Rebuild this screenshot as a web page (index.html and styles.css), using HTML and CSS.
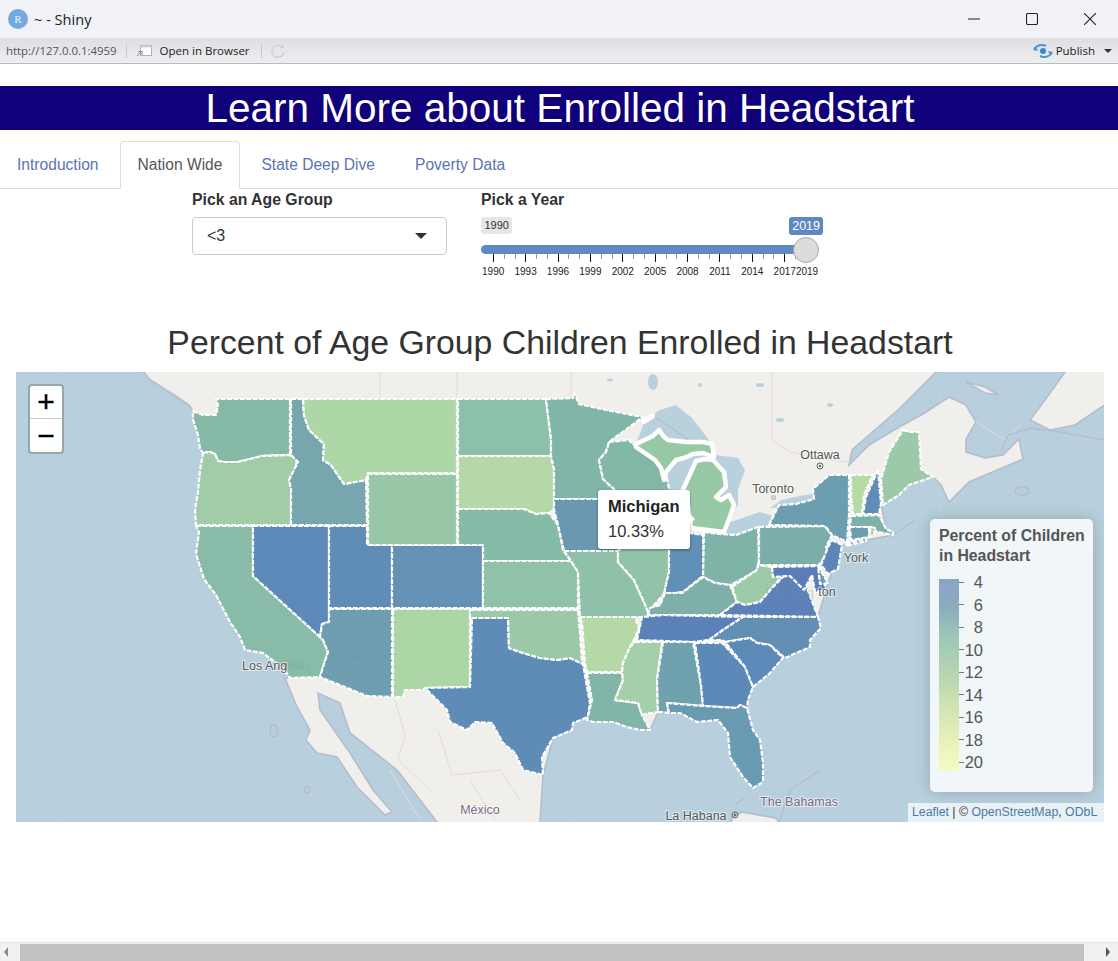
FILE: index.html
```html
<!DOCTYPE html>
<html lang="en">
<head>
<meta charset="utf-8">
<title>~ - Shiny</title>
<link rel="stylesheet" href="styles.css">
</head>
<body>
<div class="window">
  <header class="titlebar">
    <div class="title-left">
      <span class="r-logo">R</span>
      <span class="win-title">~ - Shiny</span>
    </div>
    <div class="win-controls">
      <svg class="win-icon" viewBox="0 0 12 12"><path d="M0 6h12" stroke="#222" stroke-width="1" fill="none"/></svg>
      <svg class="win-icon" viewBox="0 0 12 12"><rect x=".5" y=".5" width="11" height="11" rx="1.5" stroke="#222" stroke-width="1.1" fill="none"/></svg>
      <svg class="win-icon" viewBox="0 0 12 12"><path d="M0 0l12 12M12 0L0 12" stroke="#222" stroke-width="1.1" fill="none"/></svg>
    </div>
  </header>
  <div class="toolbar">
    <span class="url">http://127.0.0.1:4959</span>
    <span class="tool-sep"></span>
    <svg class="tool-open" viewBox="0 0 17 14"><rect x="4.5" y="1.5" width="11" height="10" fill="#fff" stroke="#9fb2c8"/><rect x="4.5" y="1.5" width="11" height="2" fill="#c9d6e6"/><path d="M1 12l4-4M2.5 7.5H6V11" stroke="#7f8c99" fill="none"/></svg>
    <span class="open-text">Open in Browser</span>
    <span class="tool-sep"></span>
    <svg class="tool-refresh" viewBox="0 0 16 16"><path d="M13 5A6 6 0 1 0 14 9" fill="none" stroke="#ccd2da" stroke-width="1.6"/><path d="M10 5h4V1z" fill="#ccd2da"/><circle cx="8" cy="8" r="3" fill="none" stroke="#e1e4e9"/></svg>
    <span class="tool-spacer"></span>
    <svg class="tool-publish" viewBox="0 0 20 14"><path d="M1 5C4 1 9 0 13 2" fill="none" stroke="#4d94d8" stroke-width="2"/><path d="M0 6l5 1-2-4z" fill="#4d94d8"/><path d="M19 9c-3 4-8 5-12 3" fill="none" stroke="#4d94d8" stroke-width="2"/><path d="M20 8l-5-1 2 4z" fill="#4d94d8"/><circle cx="10" cy="7" r="3" fill="#3f86c9"/></svg>
    <span class="publish-text">Publish</span>
    <span class="publish-caret"></span>
  </div>

  <main class="page">
    <h1 class="banner">Learn More about Enrolled in Headstart</h1>
    <nav class="tabs">
      <a class="tab">Introduction</a>
      <a class="tab active">Nation Wide</a>
      <a class="tab">State Deep Dive</a>
      <a class="tab">Poverty Data</a>
    </nav>
    <section class="inputs">
      <div class="field-select">
        <label class="field-label">Pick an Age Group</label>
        <div class="select-box"><span>&lt;3</span><i class="select-caret"></i></div>
      </div>
      <div class="field-slider">
        <label class="field-label">Pick a Year</label>
        <div class="chips">
          <span class="chip chip-min">1990</span>
          <span class="chip chip-max">2019</span>
        </div>
        <div class="track-wrap">
          <div class="track"></div>
          <span class="handle"></span>
        </div>
        <div class="ticks">
          <i class="tick major"></i><i class="tick"></i><i class="tick"></i>
          <i class="tick major"></i><i class="tick"></i><i class="tick"></i>
          <i class="tick major"></i><i class="tick"></i><i class="tick"></i>
          <i class="tick major"></i><i class="tick"></i><i class="tick"></i>
          <i class="tick major"></i><i class="tick"></i><i class="tick"></i>
          <i class="tick major"></i><i class="tick"></i><i class="tick"></i>
          <i class="tick major"></i><i class="tick"></i><i class="tick"></i>
          <i class="tick major"></i><i class="tick"></i><i class="tick"></i>
          <i class="tick major"></i><i class="tick"></i><i class="tick"></i>
          <i class="tick major"></i><i class="tick"></i><i class="tick major"></i>
        </div>
        <div class="tick-labels">
          <span>1990</span><span>1993</span><span>1996</span><span>1999</span><span>2002</span><span>2005</span><span>2008</span><span>2011</span><span>2014</span><span>2017</span><span class="last">2019</span>
        </div>
      </div>
    </section>
    <h2 class="map-title">Percent of Age Group Children Enrolled in Headstart</h2>

    <div class="map">
      <svg class="map-svg" viewBox="16 372 1088 450" aria-hidden="true">
        <g class="basemap">
          <rect x="16" y="372" width="1088" height="450" fill="#b8d0dd"/>
          <path d="M60 372V822M16 544H1104M570 372V822M940 372V822" stroke="#bdd4e0" stroke-width="1" fill="none"/>
          <g fill="#f0efeb" stroke="#b4bccd" stroke-width="1.6">
            <path d="M144 360L144 372L149 379L166 390L189 405L193 411L193 420L198 435L200 449L203 453L200 470L198 492L195 510L196 526L199 532L196 554L204 579L216 595L230 622L240 637L245 650L263 653L283 668L290 678L285 678L297 707L310 730L306 740L317 753L337 757L357 787L385 815L392 812L373 790L350 753L320 710L318 693L340 703L350 733L397 770L437 822L445 832L540 832L540 822L543 775L553 738L573 723L590 703L587 720L613 722L640 730L650 730L658 712L680 713L697 722L718 720L728 733L730 757L743 777L753 788L763 782L763 763L760 740L753 730L747 708L753 687L770 673L785 658L810 647L810 640L821 628L818 617L828 583L842 545L866 540L893 535L886 529L881 504L899 495L909 485L933 477L941 485L949 502L969 482L1023 459L1019 439L1003 455L985 458L966 452L966 439L976 422L966 405L949 397L923 414L899 427L869 445L849 465L852 450L899 409L916 392L936 372L940 360Z"/>
            <path d="M1030 420L1045 400L1065 372L1070 360L1112 360L1112 400L1075 425L1050 430Z"/>
            <path d="M966 382L985 387L999 395L985 393Z"/>
            <path d="M730 832L732 818L742 812L775 818L790 832Z"/>
          </g>
          <g fill="#b9d1dd" stroke="none">
            <path d="M636 444L645 420L660 410L676 405L692 418L709 440L716 455L738 458L745 470L738 490L738 505L720 530L690 527L670 510L666 472L662 462Z"/>
            <path d="M770 508L782 500L800 496L812 494L815 500L795 506Z"/>
            <path d="M700 535L725 524L760 512L772 516L768 526L736 536Z"/>
            <ellipse cx="653" cy="382" rx="5" ry="8"/>
            <ellipse cx="830" cy="405" rx="3" ry="2"/>
            <ellipse cx="760" cy="385" rx="4" ry="2"/>
            <ellipse cx="610" cy="380" rx="3" ry="1.5"/>
            <ellipse cx="700" cy="385" rx="2" ry="2"/>
            <ellipse cx="780" cy="420" rx="4" ry="2"/>
            <path d="M160 386L175 394L186 402L176 396Z"/>
          </g>
          <g fill="none" stroke="#e2dadf" stroke-width="1">
            <path d="M380 372V398M457 372V398M571 372V396M772 372V440L790 452L830 460L850 462"/>
            <path d="M395 700L405 735L398 760L430 790M438 730L452 775L500 770L520 800M470 780L495 820M390 770L420 820"/>
            <path d="M976 422L1005 440L1020 425"/>
          </g>
          <g fill="none" stroke="#b4bccd" stroke-width="1.4">
            <ellipse cx="274" cy="731" rx="4" ry="6"/>
            <circle cx="307" cy="790" r="3"/>
            <ellipse cx="1022" cy="491" rx="7" ry="4"/>
            <path d="M1104 440L1060 432L1030 428L1008 435L1002 450M893 535L915 520M779 822L790 790L820 770M735 805L745 798M655 417L692 442"/>
          </g>
        </g>
        <g class="states" stroke="#fff" stroke-width="2.2" stroke-dasharray="5 1.4" stroke-linejoin="round">
          <polygon fill="#86baa6" points="193,411 203,415 216,415 218,405 216,399 290,399 290,455 277,455 262,456 250,459 238,462 224,462 218,461 215,454 210,452 204,452 203,453 200,449 198,435 193,420"/>
          <polygon fill="#a1cca8" points="203,453 210,452 215,454 218,461 224,462 238,462 250,459 262,456 290,455 297,460 295,470 289,480 292,487 291,495 291,525 196,525 195,510 198,492 200,470"/>
          <polygon fill="#88bca8" points="196,526 253,526 253,576 320,637 323,640 328,652 323,667 320,677 290,678 283,668 263,653 245,650 240,637 230,622 216,595 204,579 196,554 199,532"/>
          <polygon fill="#5d8ab8" points="253,526 329,526 329,622 322,624 320,637 253,576"/>
          <polygon fill="#5f8db8" points="329,526 367,526 367,545 392,545 392,608 329,608"/>
          <polygon fill="#6592b4" points="392,545 483,545 483,608 392,608"/>
          <polygon fill="#6f9eb0" points="329,609 392,609 392,697 367,696 320,677 323,667 328,652 323,640 320,637 322,624 329,622"/>
          <polygon fill="#add6a7" points="393,609 470,609 470,687 425,688 423,690 405,690 403,697 393,697"/>
          <polygon fill="#5f8cb7" points="472,618 508,618 509,648 520,652 540,658 557,660 570,658 583,664 587,687 590,703 588,717 573,723 572,730 553,738 542,757 543,775 523,770 515,753 503,743 492,723 475,722 467,730 450,722 447,710 425,688 470,687"/>
          <polygon fill="#77a6ae" points="291,399 303,399 304,415 309,430 324,444 323,460 331,465 344,484 366,480 367,525 291,525 291,489 289,480 298,462 291,455"/>
          <polygon fill="#aed7a8" points="303,399 457,399 457,473 368,473 366,480 344,484 331,465 323,460 324,444 309,430 304,415"/>
          <polygon fill="#98c7a8" points="368,474 457,474 457,545 368,545"/>
          <polygon fill="#8cc0a8" points="458,399 546,399 551,439 551,456 458,456"/>
          <polygon fill="#b4d8a6" points="458,456 551,456 554,469 554,510 549,513 536,514 524,509 458,509"/>
          <polygon fill="#86bba7" points="458,509 524,509 536,514 549,513 558,525 563,550 571,561 483,561 483,545 458,545"/>
          <polygon fill="#8fc2a8" points="483,561 571,561 578,572 578,608 483,608"/>
          <polygon fill="#9bc9a8" points="470,610 578,610 580,633 582,662 583,664 570,658 557,660 540,658 520,652 509,648 508,618 470,618"/>
          <polygon fill="#80b5a8" points="546,399 573,398 574,392 579,404 606,410 643,417 609,442 606,452 599,460 603,479 614,489 619,499 554,499 554,469 551,456 551,439"/>
          <polygon fill="#83b8a7" points="609,442 629,440 636,447 663,462 666,472 669,489 669,515 625,515 618,505 614,489 603,479 599,460 606,452"/>
          <polygon fill="#6a98b0" points="554,499 619,499 625,515 640,520 635,535 618,551 564,551 558,525 554,510"/>
          <polygon fill="#8ec1a8" points="564,551 618,551 618,562 634,580 643,600 648,610 648,617 642,617 635,617 580,617 578,572 571,561"/>
          <polygon fill="#90c3a8" points="625,515 669,515 669,572 664,594 648,612 643,600 634,580 618,562 618,551 635,535 640,520"/>
          <polygon fill="#6090b5" points="669,530 703,535 704,575 683,592 664,594 669,572"/>
          <polygon fill="#80b3a8" points="704,532 720,534 736,535 758,527 759,560 757,570 740,580 730,585 715,583 703,577"/>
          <polygon fill="#7eb0a9" points="648,615 650,608 660,605 665,593 682,593 703,577 715,583 730,585 737,602 720,615 663,615"/>
          <polygon fill="#9dcba8" points="732,587 757,570 758,565 772,567 787,570 773,587 760,602 745,605 737,602"/>
          <polygon fill="#5b81b8" points="720,615 737,602 745,605 760,602 773,587 790,570 807,588 818,617"/>
          <polygon fill="#5a82b9" points="637,640 642,617 663,615 743,617 723,630 709,640 693,642"/>
          <polygon fill="#648fb4" points="709,640 723,630 743,617 818,617 821,628 810,640 810,647 785,658 770,645 757,643 750,638 725,642 722,640"/>
          <polygon fill="#b5d9a6" points="582,623 580,617 635,617 639,628 635,638 630,647 623,663 622,672 587,672 585,664"/>
          <polygon fill="#81b5a7" points="587,673 622,673 623,680 615,700 638,703 642,715 650,730 640,730 627,727 613,722 593,722 587,720 592,700"/>
          <polygon fill="#a5cfa8" points="635,642 662,642 657,680 658,712 645,714 642,715 638,703 615,700 623,680 622,672 623,663 630,647"/>
          <polygon fill="#70a1ae" points="663,642 693,642 701,685 703,706 667,703 669,713 662,712 658,712 657,680"/>
          <polygon fill="#5c89b8" points="695,643 722,643 745,667 753,687 748,700 747,708 740,705 737,708 703,706 701,685"/>
          <polygon fill="#689ab1" points="667,703 703,706 737,708 740,705 747,708 753,730 760,740 763,763 763,782 753,788 743,777 730,757 728,733 718,720 697,722 680,713 669,713"/>
          <polygon fill="#5c8ab9" points="725,642 750,638 757,643 770,645 783,658 770,673 753,687 745,667"/>
          <polygon fill="#7baea9" points="759,527 825,526 832,535 826,547 828,552 819,565 759,565"/>
          <polygon fill="#6d9eb0" points="769,525 779,505 796,504 814,499 813,489 829,475 849,475 849,514 847,542 832,535 825,526"/>
          <polygon fill="#5c85b8" points="832,540 842,545 838,569 828,574 821,565 828,547"/>
          <polygon fill="#5a7db9" points="772,567 820,566 826,590 815,592 812,575 804,590 790,576 773,577"/>
          <polygon fill="#6b9ab2" points="818,566 828,583 820,584"/>
          <polygon fill="#b8dba6" points="851,475 873,475 864,495 862,514 853,514 851,495"/>
          <polygon fill="#5f8cb8" points="878,470 881,504 879,514 863,514 866,497 874,479"/>
          <polygon fill="#9ccaa8" points="903,430 909,432 919,432 921,469 933,477 909,485 899,495 883,505 881,479 889,452"/>
          <polygon fill="#7eb1a9" points="851,516 879,515 886,529 893,532 893,535 878,532 869,527 850,527"/>
          <polygon fill="#6c9cb0" points="850,527 869,527 869,537 851,540"/>
          <polygon fill="#a5d0a8" points="871,527 875,528 874,535 869,537"/>
          <polygon fill="#6d9eb0" points="846,544 866,538 866,541 846,546"/>
        </g>
        <g class="michigan" fill="#97c9a7" stroke="#fff" stroke-width="4.5" stroke-linejoin="round">
          <polygon points="636,444 653,436 659,430 664,437 668,440 686,442 703,442 712,444 714,457 703,453 693,454 684,458 676,460 671,466 666,472 664,480 661,468 655,460 636,447"/>
          <polygon points="696,461 705,459 713,460 724,472 726,487 716,497 721,500 729,495 734,505 729,519 724,532 691,528 688,505 682,492 686,483 691,472"/>
          <path d="M644 421L652 416" stroke-linecap="round" stroke-width="6"/>
        </g>
        <g class="labels">
          <text x="820" y="459" class="map-label" text-anchor="middle">Ottawa</text>
          <circle cx="820" cy="466" r="3" fill="none" stroke="#666"/><circle cx="820" cy="466" r="1.2" fill="#666"/>
          <text x="773" y="493" class="map-label" text-anchor="middle">Toronto</text>
          <rect x="772" y="496" width="3" height="3" fill="#fff" stroke="#888" stroke-width=".7"/>
          <text x="856" y="562" class="map-label" text-anchor="middle">York</text>
          <text x="242" y="670" class="map-label">Los Ang</text>
          <text x="288" y="670" class="map-label faint">eles</text>
          <text x="827" y="596" class="map-label" text-anchor="middle">ton</text>
          <text x="480" y="814" class="map-label purple" text-anchor="middle">México</text>
          <text x="799" y="806" class="map-label purple" text-anchor="middle">The Bahamas</text>
          <text x="696" y="820" class="map-label" text-anchor="middle">La Habana</text>
          <circle cx="735" cy="815" r="3" fill="none" stroke="#666"/><circle cx="735" cy="815" r="1.2" fill="#666"/>
          <text x="354" y="661" class="map-label faint" text-anchor="middle">Phoenix</text>
          <text x="790" y="597" class="map-label faint" text-anchor="middle">Washing</text>
        </g>
      </svg>

      <div class="zoom-ctl">
        <button class="zoom-btn zoom-top">+</button>
        <button class="zoom-btn">&minus;</button>
      </div>

      <div class="tip">
        <b class="tip-name">Michigan</b>
        <span class="tip-value">10.33%</span>
      </div>

      <aside class="legend">
        <div class="legend-title">Percent of Children<br>in Headstart</div>
        <div class="legend-body">
          <div class="legend-bar"></div>
          <div class="legend-scale">
            <div class="legend-row"><i></i><span>4</span></div>
            <div class="legend-row"><i></i><span>6</span></div>
            <div class="legend-row"><i></i><span>8</span></div>
            <div class="legend-row"><i></i><span>10</span></div>
            <div class="legend-row"><i></i><span>12</span></div>
            <div class="legend-row"><i></i><span>14</span></div>
            <div class="legend-row"><i></i><span>16</span></div>
            <div class="legend-row"><i></i><span>18</span></div>
            <div class="legend-row"><i></i><span>20</span></div>
          </div>
        </div>
      </aside>

      <div class="attribution"><a>Leaflet</a> | © <a>OpenStreetMap</a>, <a>ODbL</a></div>
    </div>
  </main>

  <div class="hscroll">
    <span class="arrow-left"></span>
    <span class="hthumb"></span>
    <span class="arrow-right"></span>
  </div>
</div>
</body>
</html>
```
FILE: styles.css
```css
* { box-sizing: border-box; }
html, body { margin: 0; height: 100%; overflow: hidden; background: #fff; }
body { font-family: "Liberation Sans", Arial, sans-serif; color: #333; }
.window { display: flex; flex-direction: column; height: 961px; }

.titlebar { height: 38px; background: #f1f2f8; display: flex; justify-content: space-between; align-items: center; padding: 0 22px 0 8px; }
.title-left { display: flex; align-items: center; gap: 6px; }
.r-logo { width: 20px; height: 20px; border-radius: 50%; background: #73a9dc; color: #e8f1fa; font: 11px/20px "Liberation Serif", serif; text-align: center; }
.win-title { font: 14.6px "Open Sans", sans-serif; color: #222; }
.win-controls { display: flex; gap: 46px; align-items: center; }
.win-icon { width: 12px; height: 12px; display: block; }

.toolbar { height: 26px; display: flex; align-items: center; background: linear-gradient(#dfdfe2, #eeeef1); border-bottom: 1px solid #b6bcc8; padding: 0 6px 0 6px; font: 11.5px "Open Sans", sans-serif; }
.url { color: #555; font-size: 11.4px; }
.tool-sep { width: 1px; height: 14px; background: #c8c8cc; margin: 0 0 0 9px; }
.tool-open { width: 17px; height: 14px; margin-left: 9px; }
.open-text { margin-left: 7px; color: #222; }
.open-text + .tool-sep { margin-left: 11px; }
.tool-refresh { width: 16px; height: 16px; margin-left: 8px; }
.tool-spacer { flex: 1; }
.tool-publish { width: 20px; height: 14px; }
.publish-text { margin-left: 3px; color: #222; }
.publish-caret { border: 4px solid transparent; border-top-color: #333; border-bottom: 0; margin-left: 9px; }

.page { flex: 1; min-height: 0; padding-top: 22px; }
.banner { margin: 0; height: 44px; background: #10007a; color: #fff; font-size: 40.5px; font-weight: 400; line-height: 44px; text-align: center; padding-left: 2px; }
.tabs { display: flex; gap: 3px; height: 48px; margin-top: 11px; border-bottom: 1px solid #ddd; }
.tab { height: 48px; padding: 0 17.5px; font-size: 15.6px; line-height: 46px; color: #5a74b4; border: 1px solid transparent; border-bottom: 0; }
.tab:first-child { padding-left: 16px; }
.tab.active { color: #555; background: #fff; border-color: #ddd; border-radius: 4px 4px 0 0; padding: 0 16.5px; }

.inputs { display: flex; gap: 34px; padding: 0 0 0 192px; height: 133px; }
.field-label { display: block; font-weight: 700; font-size: 15.8px; line-height: 18px; margin-top: 2px; }
.field-select { width: 255px; }
.select-box { margin-top: 8px; height: 38px; border: 1px solid #ccc; border-radius: 4px; display: flex; align-items: center; justify-content: space-between; padding: 0 19px 0 14px; font-size: 16px; color: #333; }
.select-caret { border: 6px solid transparent; border-top-color: #333; border-bottom: 0; }

.field-slider { width: 342px; position: relative; }
.chips { display: flex; justify-content: space-between; margin-top: 8px; height: 18px; }
.chip { font-size: 11px; line-height: 17px; padding: 0 3.5px; border-radius: 3px; height: 17px; }
.chip-min { background: #e6e6e6; color: #333; }
.chip-max { background: #5f88c3; color: #fff; font-size: 12.5px; height: 18px; line-height: 18px; padding: 0 3px; }
.track-wrap { position: relative; margin-top: 10px; height: 9px; width: 325px; }
.track { height: 9px; background: #6088c3; border-radius: 5px; }
.handle { position: absolute; right: -13px; top: -8.5px; width: 26px; height: 26px; border-radius: 50%; background: #dcdcdc; border: 1px solid #aaa; }
.ticks { display: flex; justify-content: space-between; align-items: flex-start; margin: 0 15px 0 12px; width: 314px; height: 11px; }
.tick { width: 1px; height: 5px; background: #999; }
.tick.major { height: 8px; background: #111; }
.tick-labels { display: flex; margin-left: -4px; font-size: 10px; line-height: 12px; margin-top: 1px; color: #222; }
.tick-labels span { flex: 0 0 32.4px; text-align: center; }
.tick-labels .last { flex-basis: 20px; margin-left: -5px; }

.map-title { margin: 0; height: 50px; font-size: 33.8px; font-weight: 400; line-height: 40px; text-align: center; color: #333; padding-left: 2px; }

.map { position: relative; height: 450px; margin: 0 14px 0 16px; overflow: hidden; }
.map-svg { display: block; width: 1088px; height: 450px; }
.basemap { filter: blur(.4px); }
.map-label { font: 12.5px "Liberation Sans", sans-serif; fill: #555; paint-order: stroke; stroke: rgba(255,255,255,.6); stroke-width: 2px; }
.map-label.purple { fill: #7a6a86; }
.map-label.faint { fill: #6d8fae; stroke: none; opacity: .35; }

.zoom-ctl { position: absolute; left: 12px; top: 12px; width: 36px; border: 2px solid #97a6ad; border-radius: 4px; background: #fff; display: flex; flex-direction: column; }
.zoom-btn { width: 32px; height: 33px; border: 0; background: none; padding: 0; font: 400 30px/30px "Liberation Sans", sans-serif; color: #000; -webkit-text-stroke: .4px #000; }
.zoom-top { border-bottom: 1px solid #ccc; }

.tip { position: absolute; left: 582px; top: 118px; width: 92px; height: 59px; background: #fff; border-radius: 3px; box-shadow: 0 1px 3px rgba(0,0,0,.4); padding: 7px 10px; display: flex; flex-direction: column; gap: 6px; font-size: 16.5px; line-height: 19px; }
.tip::after { content: ""; position: absolute; right: -5px; top: 24px; border: 5px solid transparent; border-left-color: #fff; border-right: 0; }
.tip-name { color: #222; }
.tip-value { color: #333; }

.legend { position: absolute; left: 914px; top: 147px; width: 163px; height: 273px; background: rgba(255,255,255,.8); border-radius: 5px; box-shadow: 0 0 15px rgba(0,0,0,.2); padding: 7px 0 0 9px; color: #555; }
.legend-title { font-weight: 700; font-size: 15.8px; line-height: 20px; margin-bottom: 13px; white-space: nowrap; }
.legend-body { display: flex; height: 192px; }
.legend-bar { width: 20px; height: 192px; background: linear-gradient(#8aa3c9 0%, #8badbf 15%, #9cc7b8 30%, #b6d6b0 50%, #d6e6b4 70%, #edf5bc 90%, #f4f9c6 100%); }
.legend-scale { display: flex; flex-direction: column; justify-content: space-between; margin-top: -6px; height: 198px; width: 24px; }
.legend-row { display: flex; align-items: center; height: 18px; }
.legend-row i { width: 5px; height: 1px; background: #777; flex: none; }
.legend-row span { flex: 1; text-align: right; font-size: 16.5px; line-height: 18px; color: #555; }

.attribution { position: absolute; right: 0; bottom: 0; height: 19px; width: 196px; padding: 0 0 0 4px; background: rgba(255,255,255,.7); font-size: 12.3px; line-height: 19px; color: #333; white-space: nowrap; }
.attribution a { color: #4a7aa8; }

.hscroll { height: 19px; background: #f1f1f1; border-top: 1px solid #e6e6e6; display: flex; align-items: center; padding-left: 4px; }
.arrow-left { border: 5px solid transparent; border-right-color: #8a8a8a; border-left: 0; border-width: 5px 4px 5px 0; }
.hthumb { width: 1064px; height: 17px; background: #c1c1c1; margin-left: 12px; }
.arrow-right { border-style: solid; border-color: transparent transparent transparent #555; border-width: 5px 0 5px 4px; margin-left: 22px; }
```
